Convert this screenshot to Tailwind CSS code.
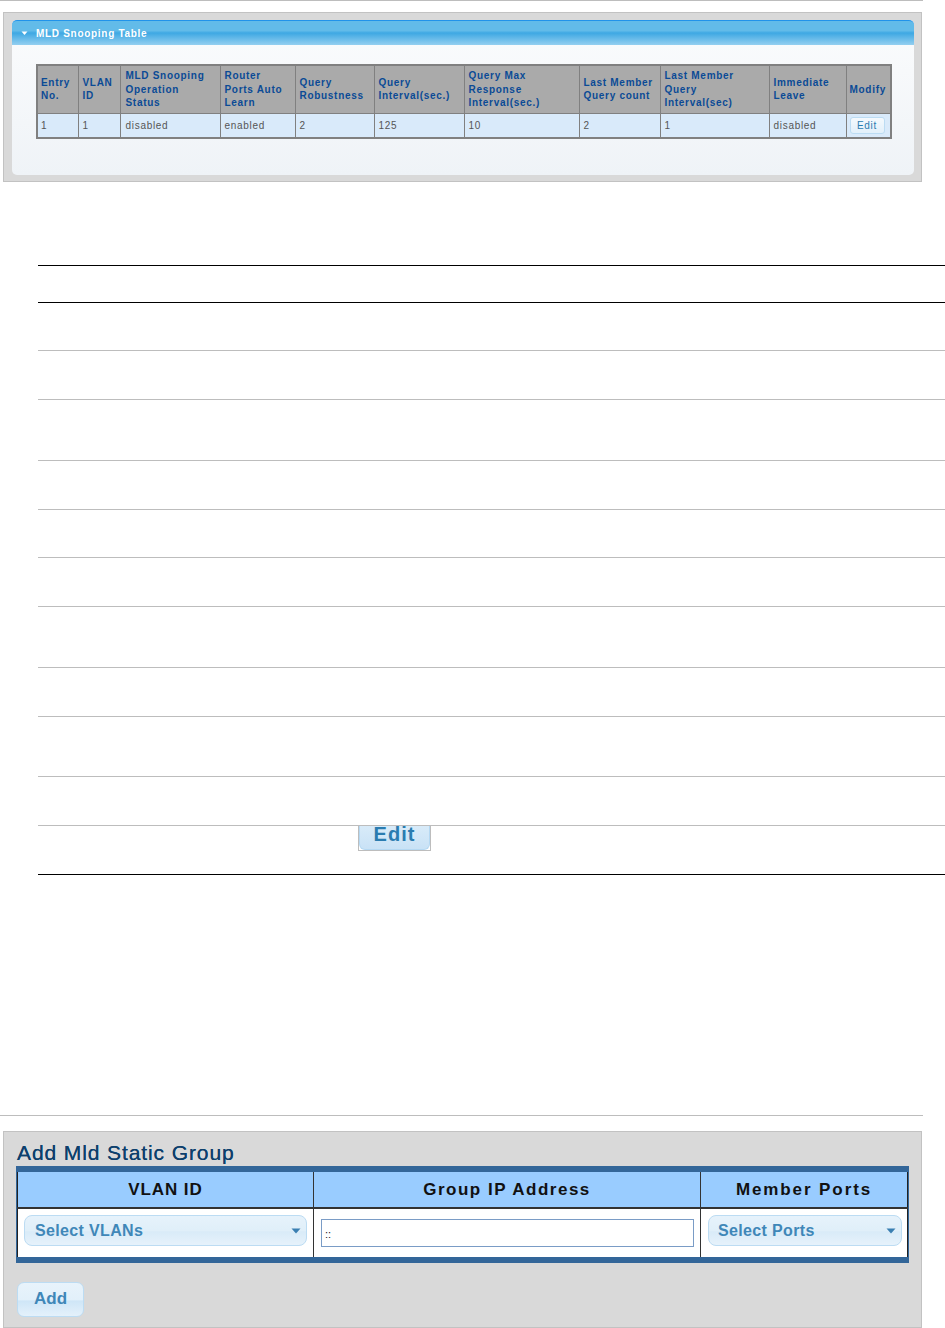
<!DOCTYPE html>
<html>
<head>
<meta charset="utf-8">
<script src="https://cdn.jsdelivr.net/npm/@tailwindcss/browser@4"></script>
</head>
<body class="bg-white font-['Liberation_Sans',Arial,sans-serif] w-[945px] h-[1328px] overflow-hidden">
  <div class="h-px w-[923px] bg-[#bdbdbd]"></div>

  <!-- MLD Snooping panel -->
  <section class="mt-[11px] ml-[3px] w-[919px] h-[170px] bg-[#d9d9d9] border border-[#c2c2c2] pt-[7px] px-2">
    <div class="w-[902px] h-[155px] rounded-[5px] bg-linear-to-b from-[#fbfcfd] to-[#eff3f7]">
      <div class="h-[25px] rounded-t-[5px] border-t border-[#2193ea] bg-[linear-gradient(#62bbe9_0,#62bbe9_40%,#3ea8e3_50%,#94cff0_100%)] flex items-center pl-[9px]">
        <svg width="8" height="5" viewBox="0 0 8 5" class="mr-[7px]"><path d="M0.5 0.5H6.5L3.5 4Z" fill="#fff"/></svg>
        <span class="text-[10px] font-bold tracking-[0.7px] text-white">MLD Snooping Table</span>
      </div>
      <div class="pt-[19px] pl-6">
        <table class="table-fixed w-[854px] border-collapse border-2 border-[#808080] text-[10px] leading-[13.5px] tracking-[0.7px] whitespace-nowrap">
          <colgroup>
            <col class="w-[41px]"><col class="w-[42px]"><col class="w-[100px]"><col class="w-[75px]"><col class="w-[79px]"><col class="w-[90px]"><col class="w-[115px]"><col class="w-[81px]"><col class="w-[109px]"><col class="w-[77px]"><col class="w-[45px]">
          </colgroup>
          <thead class="bg-[#aaaaaa] text-[#0b4a96] text-left font-bold">
            <tr class="h-[48px]">
              <th class="border border-[#808080] pl-[3px] font-bold">Entry<br>No.</th>
              <th class="border border-[#808080] pl-[4px] font-bold">VLAN<br>ID</th>
              <th class="border border-[#808080] pl-[5px] font-bold">MLD Snooping<br>Operation<br>Status</th>
              <th class="border border-[#808080] pl-[4px] font-bold">Router<br>Ports Auto<br>Learn</th>
              <th class="border border-[#808080] pl-[4px] font-bold">Query<br>Robustness</th>
              <th class="border border-[#808080] pl-[4px] font-bold">Query<br>Interval(sec.)</th>
              <th class="border border-[#808080] pl-[4px] font-bold">Query Max<br>Response<br>Interval(sec.)</th>
              <th class="border border-[#808080] pl-[4px] font-bold">Last Member<br>Query count</th>
              <th class="border border-[#808080] pl-[4px] font-bold">Last Member<br>Query<br>Interval(sec)</th>
              <th class="border border-[#808080] pl-[4px] font-bold">Immediate<br>Leave</th>
              <th class="border border-[#808080] pl-[3px] font-bold">Modify</th>
            </tr>
          </thead>
          <tbody class="bg-[#d9eafa] text-[#555555]">
            <tr class="h-[25px]">
              <td class="border border-[#808080] pl-[3px] pt-px">1</td>
              <td class="border border-[#808080] pl-[4px] pt-px">1</td>
              <td class="border border-[#808080] pl-[5px] pt-px">disabled</td>
              <td class="border border-[#808080] pl-[4px] pt-px">enabled</td>
              <td class="border border-[#808080] pl-[4px] pt-px">2</td>
              <td class="border border-[#808080] pl-[4px] pt-px">125</td>
              <td class="border border-[#808080] pl-[4px] pt-px">10</td>
              <td class="border border-[#808080] pl-[4px] pt-px">2</td>
              <td class="border border-[#808080] pl-[4px] pt-px">1</td>
              <td class="border border-[#808080] pl-[4px] pt-px">disabled</td>
              <td class="border border-[#808080] pl-[3px]">
                <div class="w-[35px] h-[17px] rounded-[3px] border border-[#bcdcf3] bg-linear-to-b from-[#f4f9fd] to-[#e2f0fa] text-center text-[#2a7cb0] leading-[15px]">Edit</div>
              </td>
            </tr>
          </tbody>
        </table>
      </div>
    </div>
  </section>

  <!-- Empty ruled table -->
  <div class="mt-[83px] ml-[38px] w-[907px] relative">
    <div class="h-[37px] border-t border-black"></div>
    <div class="h-[48px] border-t border-black"></div>
    <div class="h-[49px] border-t border-[#bdbdbd]"></div>
    <div class="h-[61px] border-t border-[#bdbdbd]"></div>
    <div class="h-[49px] border-t border-[#bdbdbd]"></div>
    <div class="h-[48px] border-t border-[#bdbdbd]"></div>
    <div class="h-[49px] border-t border-[#bdbdbd]"></div>
    <div class="h-[61px] border-t border-[#bdbdbd]"></div>
    <div class="h-[49px] border-t border-[#bdbdbd]"></div>
    <div class="h-[60px] border-t border-[#bdbdbd]"></div>
    <div class="h-[49px] border-t border-[#bdbdbd]"></div>
    <div class="h-[49px] border-t border-[#bdbdbd] pl-[320px]">
      <div class="w-[73px] h-[25px] border-x border-b border-[#bdbdbd]">
        <div class="h-[24px] overflow-hidden rounded-b-[6px] border-x border-b border-[#b5d8f2] bg-linear-to-b from-[#d8ebf9] to-[#c9e2f6] text-center text-[20px] leading-[16px] font-bold tracking-[1px] text-[#2a7cb0]">Edit</div>
      </div>
    </div>
    <div class="border-t border-black"></div>
  </div>

  <div class="mt-[240px] h-px w-[923px] bg-[#bdbdbd]"></div>

  <!-- Add Mld Static Group -->
  <section class="mt-[15px] ml-[3px] w-[919px] h-[197px] bg-[#d9d9d9] border border-[#c2c2c2] pl-[12px]">
    <h2 class="h-[34px] pt-[7px] pl-px text-[21px] leading-[28px] tracking-[0.9px] text-[#0d3f6c] [text-shadow:0_0_0.6px_#0d3f6c]">Add Mld Static Group</h2>
    <div class="w-[893px] h-[97px] bg-[#336699] py-[6px] px-px">
      <table class="table-fixed w-full h-[85px] border-collapse border-x border-[#222] bg-white">
        <colgroup><col class="w-[296px]"><col class="w-[387px]"><col></colgroup>
        <thead class="bg-[#99ccff] text-[#111] text-[17px] tracking-[1.5px]">
          <tr class="h-[36px] border-b-2 border-[#333]">
            <th class="font-bold border-r border-[#333] tracking-[0.9px]">VLAN ID</th>
            <th class="font-bold border-r border-[#333]">Group IP Address</th>
            <th class="font-bold tracking-[1.9px]">Member Ports</th>
          </tr>
        </thead>
        <tbody>
          <tr>
            <td class="align-top border-r border-[#333] pl-[6px] pt-[6px]">
              <div class="w-[283px] h-[31px] rounded-[8px] border border-[#bcdcf3] bg-[linear-gradient(#e6f2fb_0,#e0eff9_50%,#d9ebf8_55%,#e6f2fb_100%)] flex items-center justify-between pl-[10px] pr-[5px] text-[16px] tracking-[0.35px] font-bold text-[#3f87b8]">
                <span>Select VLANs</span>
                <svg width="10" height="6" viewBox="0 0 10 6"><path d="M0.5 0.5H9.5L5 5.5Z" fill="#3a7fb2"/></svg>
              </div>
            </td>
            <td class="align-top border-r border-[#333] pl-[7px] pt-[10px]">
              <div class="w-[373px] h-[28px] border border-[#7a9cc6] bg-white pl-[3px] text-[11px] leading-[28px] text-[#222]">::</div>
            </td>
            <td class="align-top pl-[7px] pt-[6px]">
              <div class="w-[194px] h-[31px] rounded-[8px] border border-[#bcdcf3] bg-[linear-gradient(#e6f2fb_0,#e0eff9_50%,#d9ebf8_55%,#e6f2fb_100%)] flex items-center justify-between pl-[9px] pr-[5px] text-[16px] tracking-[0.35px] font-bold text-[#3f87b8]">
                <span>Select Ports</span>
                <svg width="10" height="6" viewBox="0 0 10 6"><path d="M0.5 0.5H9.5L5 5.5Z" fill="#3a7fb2"/></svg>
              </div>
            </td>
          </tr>
        </tbody>
      </table>
    </div>
    <div class="mt-[19px] ml-px w-[67px] h-[35px] rounded-[7px] border border-[#bcdcf3] bg-[linear-gradient(#e8f3fb_0,#e2f0fa_50%,#cfe6f7_55%,#e4f1fb_100%)] text-center text-[17px] leading-[32px] font-bold text-[#3f87b8]">Add</div>
  </section>
</body>
</html>
